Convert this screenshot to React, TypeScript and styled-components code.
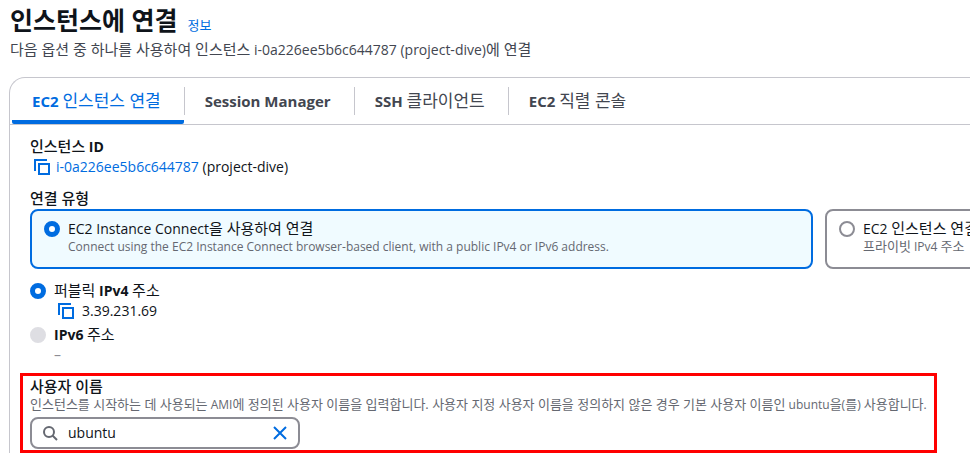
import React, { useState } from "react";
import styled, { createGlobalStyle } from "styled-components";

const BLUE = "#006ce0";
const BORDER = "#c6c6cd";
const GREY = "#8c8c94";

const GlobalStyle = createGlobalStyle`
  * { box-sizing: border-box; }
  body {
    margin: 0;
    overflow: hidden;
    background: #fff;
    color: #0f141a;
    font-family: "Open Sans", "Noto Sans CJK KR", sans-serif;
    font-size: 14px;
    line-height: 20px;
  }
  button, input { font: inherit; color: inherit; }
`;

const Page = styled.main`
  padding: 4px 0 0 9px;
`;

const TitleRow = styled.div`
  display: flex;
  align-items: baseline;
  gap: 10px;
  padding-left: 1px;
`;

const Title = styled.h1`
  margin: 0;
  font-size: 25px;
  line-height: 32px;
  font-weight: 700;
`;

const Link = styled.a<{ $small?: boolean }>`
  color: ${BLUE};
  text-decoration: none;
  font-size: ${(p) => (p.$small ? 13 : 14)}px;
`;

const Lead = styled.p`
  margin: 4px 0 0;
  padding-left: 1px;
  color: #424650;
  white-space: nowrap;
`;

const Panel = styled.section`
  margin-top: 17px;
  border: 1px solid ${BORDER};
  border-width: 1px 0 0 1px;
  border-radius: 16px 0 0 0;
`;

const TabList = styled.div`
  display: flex;
  padding-left: 2px;
  border-bottom: 1px solid ${BORDER};
`;

const Tab = styled.button<{ $active: boolean }>`
  display: flex;
  align-items: center;
  height: 46px;
  padding: 0;
  border: 0;
  border-bottom: 4px solid ${(p) => (p.$active ? BLUE : "transparent")};
  border-radius: 2px;
  background: none;
  color: ${(p) => (p.$active ? BLUE : "#424650")};
  font-size: 15px;
  font-weight: 700;
  white-space: nowrap;
  cursor: pointer;
`;

const TabText = styled.span`
  padding: 4px 23px 0 20px;
  line-height: 24px;
`;

const TabDivider = styled.span`
  width: 1px;
  height: 28px;
  margin-top: 9px;
  background: ${BORDER};
`;

const Hangul = styled.span<{ $size: number; $weight: number }>`
  font-size: ${(p) => p.$size}px;
  font-weight: ${(p) => p.$weight};
  line-height: 1;
`;

const Content = styled.div`
  padding: 12px 0 0 20px;
`;

const Label = styled.div`
  font-weight: 700;
`;

const ValueRow = styled.div<{ $indent?: boolean }>`
  display: flex;
  align-items: center;
  gap: ${(p) => (p.$indent ? 8 : 6)}px;
  padding-left: ${(p) => (p.$indent ? 28 : 4)}px;
  line-height: 20px;
`;

const IconButton = styled.button`
  display: flex;
  padding: 0;
  border: 0;
  background: none;
  color: ${BLUE};
  cursor: pointer;
`;

const Fieldset = styled.fieldset`
  margin: 12px 0 0;
  padding: 0;
  border: 0;
  min-width: 0;
`;

const Legend = styled.legend`
  padding: 0;
`;

const Tiles = styled.div`
  display: grid;
  grid-auto-flow: column;
  grid-auto-columns: 83.3%;
  gap: 12px;
  overflow: hidden;
`;

const Tile = styled.label<{ $active: boolean }>`
  display: flex;
  gap: 8px;
  height: 60px;
  padding: 8px 12px;
  border: 2px solid ${(p) => (p.$active ? BLUE : GREY)};
  border-radius: 8px;
  background: ${(p) => (p.$active ? "#f0fbff" : "#fff")};
  white-space: nowrap;
`;

const Radio = styled.input`
  appearance: none;
  flex: none;
  width: 16px;
  height: 16px;
  margin: 2px 0;
  border: 2px solid ${GREY};
  border-radius: 50%;
  background: #fff;
  &:checked { border: 5px solid ${BLUE}; }
  &:disabled { border-color: #dedee3; background: #dedee3; }
`;

const TileText = styled.span`
  display: flex;
  flex-direction: column;
`;

const Hint = styled.span`
  color: #656871;
  font-size: 12px;
  line-height: 16px;
  white-space: nowrap;
`;

const Option = styled.label`
  display: flex;
  gap: 8px;
  font-weight: 700;
`;

const Addresses = styled.div`
  display: flex;
  flex-direction: column;
  gap: 4px;
  padding-top: 12px;
`;

const Dash = styled.div`
  padding-left: 24px;
  color: ${GREY};
`;

const Highlight = styled.section`
  display: flex;
  flex-direction: column;
  align-items: flex-start;
  width: fit-content;
  margin: 8px 0 0 -10px;
  padding: 1px 7px;
  border: 3px solid #f00;
`;

const SearchBox = styled.div`
  display: flex;
  align-items: center;
  gap: 10px;
  width: 270px;
  height: 32px;
  margin-top: 4px;
  padding: 0 10px;
  border: 2px solid ${GREY};
  border-radius: 8px;
  color: #656871;
`;

const SearchInput = styled.input`
  flex: 1;
  min-width: 0;
  padding: 0;
  border: 0;
  outline: 0;
  background: none;
  color: #0f141a;
`;

const CopyIcon = () => (
  <svg width="16" height="16" viewBox="0 0 16 16" fill="none" stroke="currentColor" strokeWidth="2">
    <path d="M1 12V1h12" />
    <path d="M5 5h10v10H5z" />
  </svg>
);

const SearchIcon = () => (
  <svg width="16" height="16" viewBox="0 0 16 16" fill="none" stroke="currentColor" strokeWidth="2">
    <circle cx="7" cy="7" r="5" />
    <path d="M10.5 10.5 15 15" />
  </svg>
);

const CloseIcon = () => (
  <svg width="16" height="16" viewBox="0 0 16 16" fill="none" stroke="currentColor" strokeWidth="2">
    <path d="m2 2 12 12M14 2 2 14" />
  </svg>
);

/* Sets Hangul runs one step larger than the Latin text around them. */
const Mixed = ({ text, size = 15, weight = 400 }: { text: string; size?: number; weight?: number }) => (
  <span>
    {text.split(/([가-힣]+(?:[ .]+[가-힣]+)*)/).map((part, i) =>
      i % 2 ? <Hangul key={i} $size={size} $weight={weight}>{part}</Hangul> : part
    )}
  </span>
);

const TABS = ["EC2 인스턴스 연결", "Session Manager", "SSH 클라이언트", "EC2 직렬 콘솔"];

export default function App() {
  const [tab, setTab] = useState(0);
  const [type, setType] = useState(0);
  const [user, setUser] = useState("ubuntu");

  return (
    <>
      <GlobalStyle />
      <Page>
        <TitleRow>
          <Title>인스턴스에 연결</Title>
          <Link href="#info" $small>정보</Link>
        </TitleRow>
        <Lead>
          <Mixed text="다음 옵션 중 하나를 사용하여 인스턴스 i-0a226ee5b6c644787 (project-dive)에 연결" />
        </Lead>
        <Panel>
          <TabList role="tablist">
            {TABS.map((name, i) => (
              <React.Fragment key={name}>
                {i > 0 && <TabDivider />}
                <Tab role="tab" aria-selected={tab === i} $active={tab === i} onClick={() => setTab(i)}>
                  <TabText><Mixed text={name} size={17} /></TabText>
                </Tab>
              </React.Fragment>
            ))}
          </TabList>
          <Content>
            <Label><Mixed text="인스턴스 ID" weight={500} /></Label>
            <ValueRow>
              <IconButton aria-label="복사"><CopyIcon /></IconButton>
              <span><Link href="#instance">i-0a226ee5b6c644787</Link> (project-dive)</span>
            </ValueRow>
            <Fieldset>
              <Legend><Mixed text="연결 유형" weight={500} /></Legend>
              <Tiles>
                <Tile $active={type === 0}>
                  <Radio type="radio" name="type" checked={type === 0} onChange={() => setType(0)} />
                  <TileText>
                    <Mixed text="EC2 Instance Connect을 사용하여 연결" />
                    <Hint>Connect using the EC2 Instance Connect browser-based client, with a public IPv4 or IPv6 address.</Hint>
                  </TileText>
                </Tile>
                <Tile $active={type === 1}>
                  <Radio type="radio" name="type" checked={type === 1} onChange={() => setType(1)} />
                  <TileText>
                    <Mixed text="EC2 인스턴스 연결" />
                    <Hint><Mixed text="프라이빗 IPv4 주소" size={13} /></Hint>
                  </TileText>
                </Tile>
              </Tiles>
            </Fieldset>
            <Addresses>
              <div>
                <Option>
                  <Radio type="radio" name="address" defaultChecked />
                  <Mixed text="퍼블릭 IPv4 주소" />
                </Option>
                <ValueRow $indent>
                  <IconButton aria-label="복사"><CopyIcon /></IconButton>
                  <span>3.39.231.69</span>
                </ValueRow>
              </div>
              <div>
                <Option>
                  <Radio type="radio" name="address" disabled />
                  <Mixed text="IPv6 주소" />
                </Option>
                <Dash>–</Dash>
              </div>
            </Addresses>
            <Highlight>
              <label htmlFor="user"><Mixed text="사용자 이름" weight={500} /></label>
              <Hint>
                <Mixed
                  size={13}
                  text="인스턴스를 시작하는 데 사용되는 AMI에 정의된 사용자 이름을 입력합니다. 사용자 지정 사용자 이름을 정의하지 않은 경우 기본 사용자 이름인 ubuntu을(를) 사용합니다."
                />
              </Hint>
              <SearchBox>
                <SearchIcon />
                <SearchInput id="user" value={user} onChange={(e) => setUser(e.target.value)} />
                <IconButton aria-label="지우기" onClick={() => setUser("")}><CloseIcon /></IconButton>
              </SearchBox>
            </Highlight>
          </Content>
        </Panel>
      </Page>
    </>
  );
}
